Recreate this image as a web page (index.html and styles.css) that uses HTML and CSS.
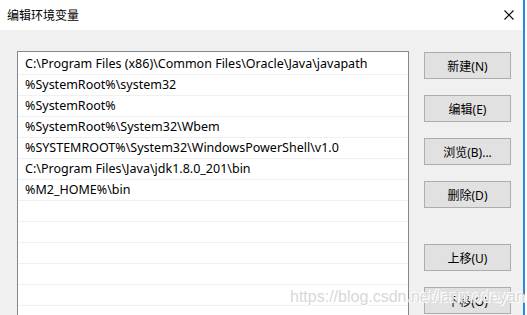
FILE: index.html
```html
<!DOCTYPE html>
<html>
<head>
	<meta charset="utf-8">
	<meta name="viewport" content="width=device-width, initial-scale=1">
	<title>编辑环境变量</title>
	<link rel="stylesheet" href="styles.css">
</head>
<body>
<div class="dialog">
	<!-- title bar -->
	<div class="titlebar">
		<span class="title">编辑环境变量</span>
		<svg class="close" viewBox="0 0 10 10" width="10" height="10">
			<path d="M 0.5 0.5 L 9.5 9.5 M 9.5 0.5 L 0.5 9.5" stroke="#000" stroke-width="1.1" fill="none"></path>
		</svg>
	</div>

	<div class="content">
		<!-- path entries -->
		<ul class="list">
			<li>C:\Program Files (x86)\Common Files\Oracle\Java\javapath</li>
			<li>%SystemRoot%\system32</li>
			<li>%SystemRoot%</li>
			<li>%SystemRoot%\System32\Wbem</li>
			<li>%SYSTEMROOT%\System32\WindowsPowerShell\v1.0</li>
			<li>C:\Program Files\Java\jdk1.8.0_201\bin</li>
			<li>%M2_HOME%\bin</li>
			<li></li>
			<li></li>
			<li></li>
			<li></li>
			<li></li>
			<li></li>
		</ul>

		<!-- actions -->
		<div class="actions">
			<button>新建(N)</button>
			<button>编辑(E)</button>
			<button>浏览(B)...</button>
			<button class="spaced">删除(D)</button>
			<button>上移(U)</button>
			<button>下移(O)</button>
		</div>
	</div>
</div>
<div class="side"></div>
<div class="watermark">https://blog.csdn.net/lanmodeyan</div>
</body>
</html>
```

FILE: styles.css
```css
* {
  box-sizing: border-box;
  padding: 0;
  margin: 0;
}
body {
  width: 527px;
  height: 315px;
  overflow: hidden;
  display: flex;
  background: #fff;
  font-family: "Noto Sans", "Noto Sans CJK SC", sans-serif;
  font-size: 12px;
  color: #000;
}

.dialog {
  width: 525px;
  height: 315px;
  flex-shrink: 0;
  border-right: 2px solid #2b88d8;
  background: #f0f0f0;
  display: flex;
  flex-direction: column;
  overflow: hidden;
}

.titlebar {
  height: 30px;
  flex-shrink: 0;
  background: #fff;
  display: flex;
  align-items: center;
  justify-content: space-between;
  padding: 0 9px 1px 7px;
}
.title {
  font-family: "Noto Sans CJK SC", sans-serif;
  font-size: 12px;
}

.content {
  flex: 1;
  min-height: 0;
  overflow: hidden;
  display: flex;
  align-items: flex-start;
  gap: 15px;
  padding: 21px 0 0 17px;
}

.list {
  list-style: none;
  flex-shrink: 0;
  width: 392px;
  background: #fff;
  border: 1px solid #828790;
  border-bottom: none;
  padding-top: 1px;
}
.list li {
  height: 21px;
  line-height: 20px;
  padding-left: 7px;
  border-bottom: 1px solid #f0f0f0;
  white-space: nowrap;
  font-size: 12.5px;
}
.list li:first-child {
  height: 22px;
  line-height: 21px;
}

.actions {
  display: flex;
  flex-direction: column;
  gap: 16px;
  padding-top: 1px;
}
.actions button {
  width: 87px;
  height: 27px;
  flex-shrink: 0;
  background: #e1e1e1;
  border: 1px solid #adadad;
  font-family: "Noto Sans", "Noto Sans CJK SC", sans-serif;
  font-size: 12px;
  color: #000;
}
.actions .spaced {
  margin-bottom: 20px;
}

.side {
  flex: 1;
  background: #fff;
}

/* faint site watermark over the lower right */
.watermark {
  position: absolute;
  left: 290px;
  top: 288px;
  font-family: "Liberation Sans", sans-serif;
  font-size: 16px;
  color: #d8d8d8;
  text-shadow: 1px 1px 0 #fff, -1px -1px 0 #fff;
  white-space: nowrap;
}
```
